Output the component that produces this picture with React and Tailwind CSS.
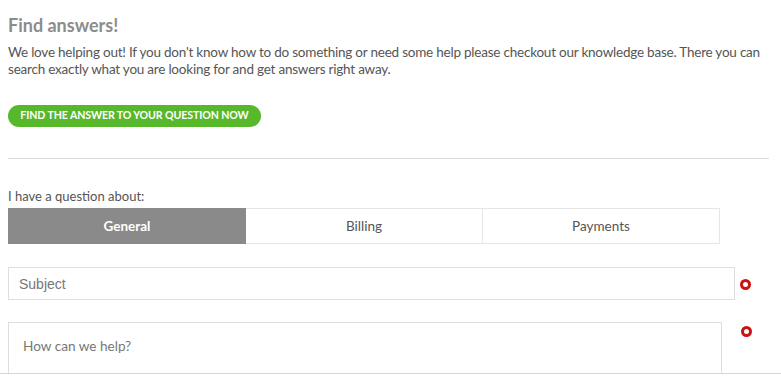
import { useState } from 'react'

const TABS = ['General', 'Billing', 'Payments']

function Required() {
  return <span className="block w-[11px] h-[11px] rounded-full border-[3px] border-[#cc1111]" />
}

export default function App() {
  const [tab, setTab] = useState(0)

  return (
    <div className="w-[781px] h-[377px] overflow-hidden bg-white font-['Lato','Open_Sans',sans-serif] text-[#555]">
      <div className="px-2 pt-[13px]">
        {/* Intro */}
        <h2 className="text-[18px] leading-[24px] font-bold text-[#8c8c8c]">Find answers!</h2>
        <p className="mt-[7px] text-[13.5px] leading-[17px] tracking-[-0.22px] w-[762px]">
          We love helping out! If you don't know how to do something or need some help please checkout our knowledge base. There you can search exactly what you are looking for and get answers right away.
        </p>
        <button className="mt-[27px] h-[22px] w-[253px] rounded-full bg-[#57b82c] text-white text-[10.6px] font-bold uppercase tracking-[-0.1px]">
          Find the answer to your question now
        </button>

        <div className="mt-[31px] h-px w-[761px] bg-[#dcdcdc]" />

        {/* Topic tabs */}
        <div className="mt-[29px] text-[13px] leading-[17px]">I have a question about:</div>
        <div className="mt-[3px] flex w-[712px] h-[36px]">
          {TABS.map((t, i) => (
            <button
              key={t}
              onClick={() => setTab(i)}
              className={`flex-1 text-[13.5px] border ${
                tab === i
                  ? 'bg-[#8a8a8a] border-[#8a8a8a] text-white font-bold'
                  : 'bg-white border-[#e6e6e6] border-l-0 text-[#555]'
              }`}
            >
              {t}
            </button>
          ))}
        </div>

        {/* Form */}
        <div className="mt-[23px] flex items-center">
          <input
            placeholder="Subject"
            className="w-[727px] h-[33px] border border-[#dedede] px-[10px] text-[14px] font-['Liberation_Sans',Arial,sans-serif] placeholder:text-[#777] outline-none"
          />
          <div className="ml-[5px] mt-[2px]">
            <Required />
          </div>
        </div>
        <div className="mt-[22px] flex items-start">
          <textarea
            placeholder="How can we help?"
            className="w-[714px] h-[51px] border border-[#dedede] border-b-0 px-[14px] pt-[15px] text-[13.6px] leading-[17px] placeholder:text-[#777] outline-none resize-none"
          />
          <div className="ml-[19px] mt-[4px]">
            <Required />
          </div>
        </div>
      </div>
      <div className="h-px bg-[#d6d6d6]" />
    </div>
  )
}
